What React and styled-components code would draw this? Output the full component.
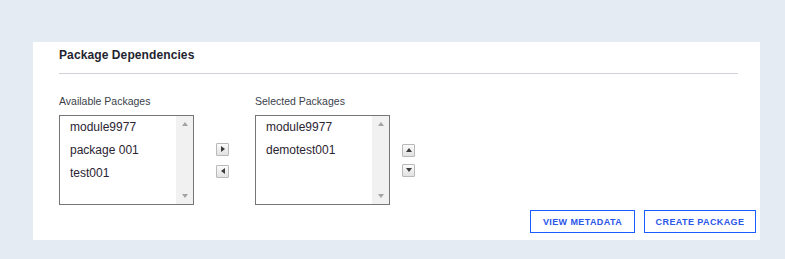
import React from 'react';
import styled, { createGlobalStyle } from 'styled-components';

const GlobalStyle = createGlobalStyle`
  html, body {
    margin: 0;
    padding: 0;
    background: #e4ebf3;
    font-family: "Liberation Sans", Arial, sans-serif;
  }
`;

const Page = styled.div`
  padding: 42px 0 0 33px;
  height: 259px;
  box-sizing: border-box;
`;

const Card = styled.section`
  width: 727px;
  height: 198px;
  background: #fff;
  box-sizing: border-box;
  padding: 0 4px 0 26px;
  display: flex;
  flex-direction: column;
`;

const Title = styled.h2`
  margin: 0;
  padding-top: 6px;
  height: 25px;
  line-height: 15px;
  font-size: 12px;
  font-weight: 700;
  color: #1f2430;
  letter-spacing: 0.1px;
`;

const Divider = styled.hr`
  margin: 0 18px 0 0;
  border: 0;
  border-top: 1px solid #cfd2d6;
`;

const Body = styled.div`
  display: flex;
  align-items: flex-end;
  margin-top: 20px;
`;

const Column = styled.div`
  display: flex;
  flex-direction: column;
`;

const Label = styled.label`
  font-size: 10.5px;
  color: #3a3f4a;
  height: 14px;
  line-height: 14px;
  margin-bottom: 7px;
`;

const ListBox = styled.div`
  width: 135px;
  height: 90px;
  box-sizing: border-box;
  border: 1px solid #767676;
  display: flex;
`;

const Items = styled.ul`
  flex: 1;
  list-style: none;
  margin: 0;
  padding: 2px 0 0 10px;
`;

const Item = styled.li`
  font-size: 12px;
  color: #2b2433;
  height: 23px;
  line-height: 19px;
`;

const Scrollbar = styled.div`
  width: 17px;
  background: #f1f1f1;
  display: flex;
  flex-direction: column;
  justify-content: space-between;
  align-items: center;
  padding: 6px 0;
`;

const Tri = styled.span`
  width: 0;
  height: 0;
  border-left: 3.5px solid transparent;
  border-right: 3.5px solid transparent;
  ${(p) => (p.$down ? 'border-top: 4px solid #a3a3a3;' : 'border-bottom: 4px solid #a3a3a3;')}
`;

const Movers = styled.div`
  height: 90px;
  display: flex;
  flex-direction: column;
  justify-content: center;
  gap: ${(p) => p.$gap}px;
  margin: ${(p) => p.$margin};
`;

const SmallBtn = styled.button`
  width: 13px;
  height: 13px;
  padding: 0;
  border: 1px solid #b9b9b9;
  border-radius: 1px;
  background: linear-gradient(#fbfbfb, #e2e2e2);
  display: flex;
  align-items: center;
  justify-content: center;
`;

const Arrow = styled.span`
  width: 0;
  height: 0;
  ${(p) => {
    const c = '#3c3c3c';
    if (p.$dir === 'right') return `border-top: 3px solid transparent; border-bottom: 3px solid transparent; border-left: 4px solid ${c};`;
    if (p.$dir === 'left') return `border-top: 3px solid transparent; border-bottom: 3px solid transparent; border-right: 4px solid ${c};`;
    if (p.$dir === 'up') return `border-left: 3px solid transparent; border-right: 3px solid transparent; border-bottom: 4px solid ${c};`;
    return `border-left: 3px solid transparent; border-right: 3px solid transparent; border-top: 4px solid ${c};`;
  }}
`;

const Actions = styled.div`
  display: flex;
  justify-content: flex-end;
  gap: 9px;
  margin-top: 5px;
`;

const ActionBtn = styled.button`
  height: 23px;
  padding: 0;
  white-space: nowrap;
  background: #fff;
  border: 1.5px solid #1a5cff;
  color: #2a56e8;
  font-family: "Liberation Sans", Arial, sans-serif;
  font-size: 9px;
  font-weight: 700;
  letter-spacing: 0.4px;
  text-transform: uppercase;
  width: ${(p) => p.$w}px;
`;

function PackageList({ label, items }) {
  return (
    <Column>
      <Label>{label}</Label>
      <ListBox>
        <Items>
          {items.map((i) => (
            <Item key={i}>{i}</Item>
          ))}
        </Items>
        <Scrollbar>
          <Tri />
          <Tri $down />
        </Scrollbar>
      </ListBox>
    </Column>
  );
}

export default function App() {
  return (
    <>
      <GlobalStyle />
      <Page>
        <Card>
          <Title>Package Dependencies</Title>
          <Divider />
          <Body>
            <PackageList label="Available Packages" items={['module9977', 'package 001', 'test001']} />
            <Movers $margin="0 26px 0 22px" $gap={9}>
              <SmallBtn><Arrow $dir="right" /></SmallBtn>
              <SmallBtn><Arrow $dir="left" /></SmallBtn>
            </Movers>
            <PackageList label="Selected Packages" items={['module9977', 'demotest001']} />
            <Movers $margin="0 0 0 12px" $gap={7}>
              <SmallBtn><Arrow $dir="up" /></SmallBtn>
              <SmallBtn><Arrow $dir="down" /></SmallBtn>
            </Movers>
          </Body>
          <Actions>
            <ActionBtn $w={105}>View Metadata</ActionBtn>
            <ActionBtn $w={112}>Create Package</ActionBtn>
          </Actions>
        </Card>
      </Page>
    </>
  );
}
